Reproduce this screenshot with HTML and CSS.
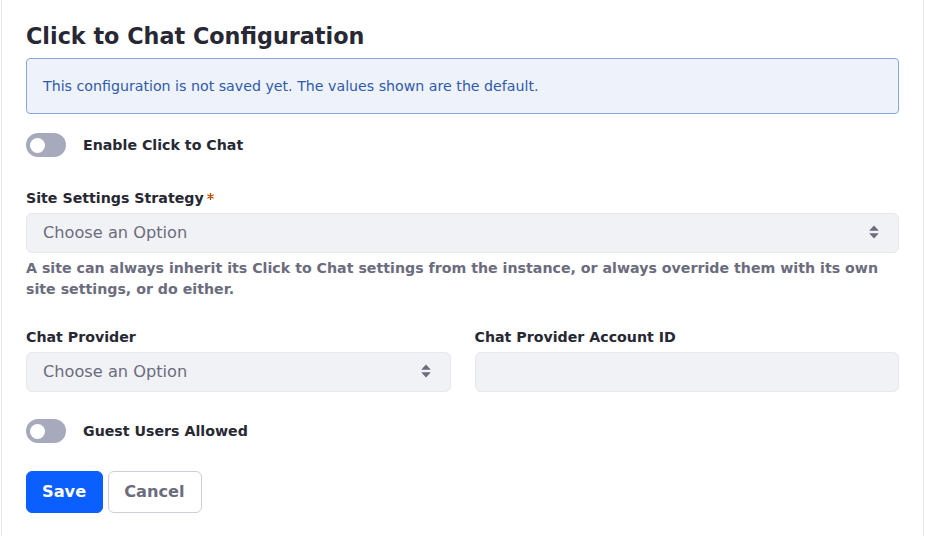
FILE: index.html
```html
<!DOCTYPE html>
<html lang="en">
<head>
<meta charset="utf-8">
<title>Click to Chat Configuration</title>
<link rel="stylesheet" href="styles.css">
</head>
<body>
<div class="sheet">
  <h2 class="title">Click to Chat Configuration</h2>
  <div class="alert">This configuration is not saved yet. The values shown are the default.</div>

  <div class="toggle-row first-toggle">
    <span class="toggle"><span class="knob"></span></span>
    <span class="toggle-label">Enable Click to Chat</span>
  </div>

  <div class="group strategy">
    <label class="label">Site Settings Strategy<svg class="req" viewBox="0 0 16 16" width="7" height="7"><path d="M8 1v14M2 4.5l12 7M2 11.5l12-7" stroke="#b95000" stroke-width="3" stroke-linecap="round" fill="none"/></svg></label>
    <div class="select">
      <span class="placeholder">Choose an Option</span>
      <svg class="caret" viewBox="0 0 10 14" width="10" height="14"><path d="M5 0.6 L9.4 5.2 Q9.8 5.8 9.1 5.8 H0.9 Q0.2 5.8 0.6 5.2 Z M5 13.4 L9.4 8.8 Q9.8 8.2 9.1 8.2 H0.9 Q0.2 8.2 0.6 8.8 Z" fill="#6b6c7e"/></svg>
    </div>
    <p class="help">A site can always inherit its Click to Chat settings from the instance, or always override them with its own site settings, or do either.</p>
  </div>

  <div class="row">
    <div class="col">
      <label class="label">Chat Provider</label>
      <div class="select">
        <span class="placeholder">Choose an Option</span>
        <svg class="caret" viewBox="0 0 10 14" width="10" height="14"><path d="M5 0.6 L9.4 5.2 Q9.8 5.8 9.1 5.8 H0.9 Q0.2 5.8 0.6 5.2 Z M5 13.4 L9.4 8.8 Q9.8 8.2 9.1 8.2 H0.9 Q0.2 8.2 0.6 8.8 Z" fill="#6b6c7e"/></svg>
      </div>
    </div>
    <div class="col">
      <label class="label">Chat Provider Account ID</label>
      <div class="input"></div>
    </div>
  </div>

  <div class="toggle-row second-toggle">
    <span class="toggle"><span class="knob"></span></span>
    <span class="toggle-label">Guest Users Allowed</span>
  </div>

  <div class="actions">
    <button class="btn btn-primary" type="button">Save</button>
    <button class="btn btn-secondary" type="button">Cancel</button>
  </div>
</div>
</body>
</html>
```
FILE: styles.css
```css
html, body {
  margin: 0;
  padding: 0;
  background: #ffffff;
}
body {
  font-family: "DejaVu Sans", "Noto Sans", sans-serif;
  color: #272833;
}
.sheet {
  box-sizing: border-box;
  margin-left: 1px;
  width: 923px;
  min-height: 536px;
  border-left: 1px solid #e7e7ed;
  border-right: 1px solid #e7e7ed;
  padding: 23px 24px 0;
  display: flex;
  flex-direction: column;
}
.title {
  margin: 0;
  font-size: 22.3px;
  line-height: 26px;
  font-weight: 700;
  color: #272833;
}
.alert {
  margin-top: 9px;
  box-sizing: border-box;
  height: 56px;
  border: 1px solid #89a7e0;
  background: #eef2fa;
  border-radius: 4px;
  color: #2e5aac;
  font-size: 14.2px;
  line-height: 22px;
  padding: 16px 16px;
}
.toggle-row {
  display: flex;
  align-items: center;
  gap: 17px;
}
.first-toggle { margin-top: 19px; }
.second-toggle { margin-top: 27px; }
.toggle {
  width: 40px;
  height: 24px;
  border-radius: 12px;
  background: #a7a9bc;
  display: flex;
  align-items: center;
  padding-left: 4px;
  box-sizing: border-box;
}
.knob {
  width: 15px;
  height: 15px;
  border-radius: 50%;
  background: #ffffff;
}
.toggle-label {
  font-size: 14.2px;
  font-weight: 700;
  line-height: 21px;
}
.strategy { margin-top: 31px; }
.label {
  display: flex;
  align-items: flex-start;
  font-size: 14.2px;
  font-weight: 700;
  line-height: 21px;
  margin-bottom: 4px;
  color: #272833;
}
.req {
  margin-left: 3px;
  margin-top: 5px;
}
.select, .input {
  box-sizing: border-box;
  height: 40px;
  background: #f1f2f5;
  border: 1px solid #e7e7ed;
  border-radius: 6px;
}
.select {
  display: flex;
  align-items: center;
  justify-content: space-between;
  padding: 0 19px 0 16px;
}
.placeholder {
  font-size: 16.2px;
  color: #6b6c7e;
  line-height: 24px;
}
.caret { display: block; margin-top: -2px; }
.help {
  margin: 5px 0 0;
  font-size: 14.2px;
  font-weight: 700;
  line-height: 21px;
  color: #6b6c7e;
}
.row {
  margin-top: 27px;
  display: grid;
  grid-template-columns: 1fr 1fr;
  column-gap: 24px;
}
.actions {
  margin-top: 28px;
  display: flex;
  gap: 5px;
}
.btn {
  font-family: "DejaVu Sans", "Noto Sans", sans-serif;
  font-size: 16.2px;
  font-weight: 700;
  line-height: 24px;
  padding: 8px 16px 8px 15px;
  border-radius: 6px;
  border: 1px solid transparent;
  cursor: pointer;
}
.btn-primary {
  background: #0b5fff;
  border-color: #0b5fff;
  color: #ffffff;
}
.btn-secondary {
  background: #ffffff;
  border-color: #cdced9;
  color: #6b6c7e;
}
```
